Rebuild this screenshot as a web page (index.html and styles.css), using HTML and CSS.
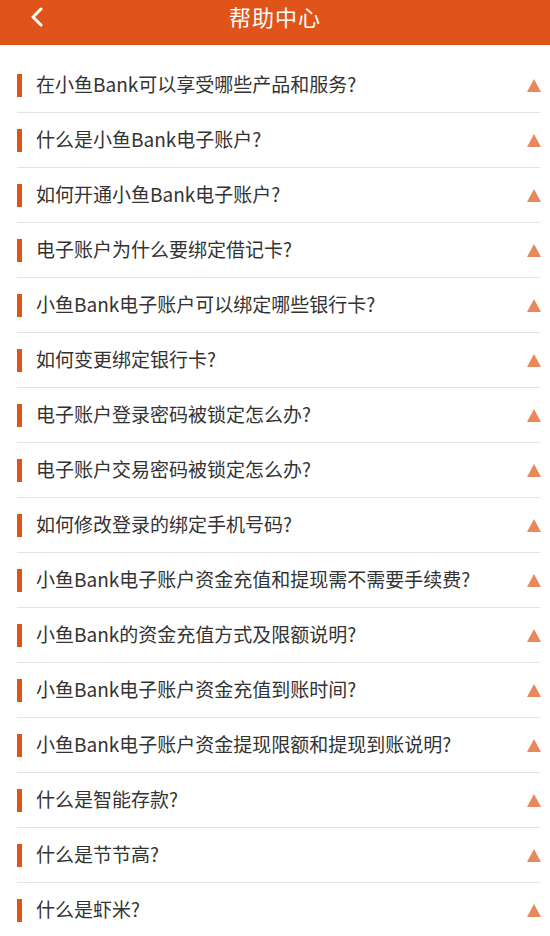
FILE: index.html
```html
<!DOCTYPE html>
<html lang="zh-CN">

<head>
    <meta charset="UTF-8">
    <meta name="viewport" content="width=device-width, initial-scale=1.0">
    <title>帮助中心</title>
    <link rel="stylesheet" href="styles.css">
</head>

<body>
    <!-- 顶部导航 -->
    <header class="topbar">
        <span class="back">
            <svg width="14" height="20" viewBox="0 0 14 20">
                <polyline points="11,2 3,10 11,18" fill="none" stroke="#fff" stroke-width="3" stroke-linecap="round" stroke-linejoin="round"/>
            </svg>
        </span>
        <h1 class="title">帮助中心</h1>
    </header>

    <!-- 问题列表 -->
    <ul class="faq">
        <li class="faq-item"><span class="mark"></span><span class="question">在小鱼Bank可以享受哪些产品和服务?</span><span class="arrow"></span></li>
        <li class="faq-item"><span class="mark"></span><span class="question">什么是小鱼Bank电子账户?</span><span class="arrow"></span></li>
        <li class="faq-item"><span class="mark"></span><span class="question">如何开通小鱼Bank电子账户?</span><span class="arrow"></span></li>
        <li class="faq-item"><span class="mark"></span><span class="question">电子账户为什么要绑定借记卡?</span><span class="arrow"></span></li>
        <li class="faq-item"><span class="mark"></span><span class="question">小鱼Bank电子账户可以绑定哪些银行卡?</span><span class="arrow"></span></li>
        <li class="faq-item"><span class="mark"></span><span class="question">如何变更绑定银行卡?</span><span class="arrow"></span></li>
        <li class="faq-item"><span class="mark"></span><span class="question">电子账户登录密码被锁定怎么办?</span><span class="arrow"></span></li>
        <li class="faq-item"><span class="mark"></span><span class="question">电子账户交易密码被锁定怎么办?</span><span class="arrow"></span></li>
        <li class="faq-item"><span class="mark"></span><span class="question">如何修改登录的绑定手机号码?</span><span class="arrow"></span></li>
        <li class="faq-item"><span class="mark"></span><span class="question">小鱼Bank电子账户资金充值和提现需不需要手续费?</span><span class="arrow"></span></li>
        <li class="faq-item"><span class="mark"></span><span class="question">小鱼Bank的资金充值方式及限额说明?</span><span class="arrow"></span></li>
        <li class="faq-item"><span class="mark"></span><span class="question">小鱼Bank电子账户资金充值到账时间?</span><span class="arrow"></span></li>
        <li class="faq-item"><span class="mark"></span><span class="question">小鱼Bank电子账户资金提现限额和提现到账说明?</span><span class="arrow"></span></li>
        <li class="faq-item"><span class="mark"></span><span class="question">什么是智能存款?</span><span class="arrow"></span></li>
        <li class="faq-item"><span class="mark"></span><span class="question">什么是节节高?</span><span class="arrow"></span></li>
        <li class="faq-item"><span class="mark"></span><span class="question">什么是虾米?</span><span class="arrow"></span></li>
    </ul>
</body>

</html>
```

FILE: styles.css
```css
body {
    font-family: "Noto Sans CJK SC", "Noto Sans", sans-serif;
    background-color: #fff;
    margin: 0;
    padding: 0;
}

/* 顶部导航 */
.topbar {
    height: 44px;
    background-color: #e0541a;
    border-bottom: 1px solid #d24c14;
    display: flex;
    align-items: flex-start;
    justify-content: center;
    position: relative;
}

.back {
    position: absolute;
    left: 30px;
    top: 7px;
    width: 14px;
    height: 20px;
}

.title {
    margin: 1px 0 0;
    font-size: 22px;
    line-height: 30px;
    font-weight: normal;
    color: #fff;
    letter-spacing: 1px;
}

/* 问题列表 */
.faq {
    list-style: none;
    margin: 13px 10px 0 17px;
    padding: 0;
}

.faq-item {
    height: 54px;
    border-bottom: 1px solid #e4e4e4;
    display: flex;
    align-items: center;
}

.faq-item:last-child {
    border-bottom: none;
}

.mark {
    width: 5px;
    height: 23px;
    background-color: #e0541a;
    flex-shrink: 0;
}

.question {
    flex: 1;
    margin-left: 14px;
    padding-bottom: 3px;
    font-size: 19px;
    line-height: 26px;
    color: #333;
    white-space: nowrap;
}

.arrow {
    width: 0;
    height: 0;
    border-left: 7px solid transparent;
    border-right: 7px solid transparent;
    border-bottom: 13px solid #e8895c;
    margin-right: -1px;
}
```
